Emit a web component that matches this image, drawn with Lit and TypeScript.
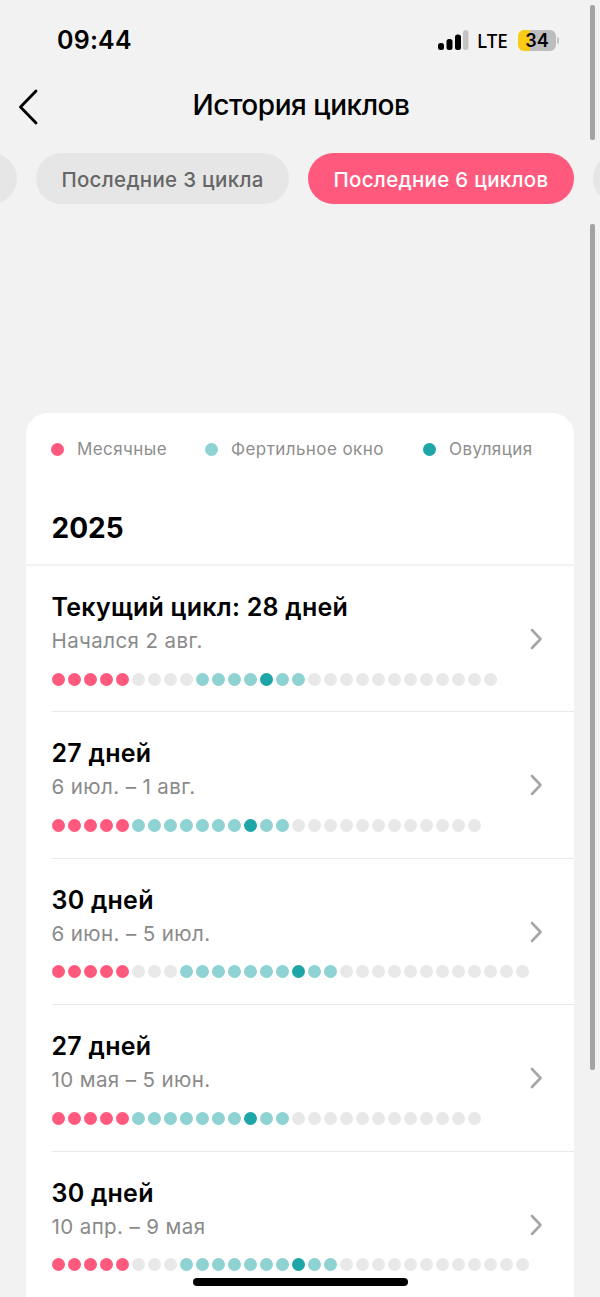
import { LitElement, html, css, svg } from "lit";
import { customElement } from "lit/decorators.js";

type Cycle = { title: string; sub: string; total: number; fertStart: number; ov: number; fertEnd: number };

const CYCLES: Cycle[] = [
  { title: "Текущий цикл: 28 дней", sub: "Начался 2 авг.", total: 28, fertStart: 9, ov: 13, fertEnd: 15 },
  { title: "27 дней", sub: "6 июл. – 1 авг.", total: 27, fertStart: 5, ov: 12, fertEnd: 14 },
  { title: "30 дней", sub: "6 июн. – 5 июл.", total: 30, fertStart: 8, ov: 15, fertEnd: 17 },
  { title: "27 дней", sub: "10 мая – 5 июн.", total: 27, fertStart: 5, ov: 12, fertEnd: 14 },
  { title: "30 дней", sub: "10 апр. – 9 мая", total: 30, fertStart: 8, ov: 15, fertEnd: 17 },
];

function dotClass(c: Cycle, i: number) {
  if (i < 5) return "dot red";
  if (i === c.ov) return "dot ov";
  if (i >= c.fertStart && i <= c.fertEnd) return "dot fert";
  return "dot";
}

@customElement("app-root")
export class AppRoot extends LitElement {
  static styles = css`
    :host {
      display: block;
      width: 600px;
      height: 1297px;
      background: #f2f2f2;
      font-family: Inter, "Noto Sans", sans-serif;
      overflow: hidden;
      position: relative;
    }
    .status {
      height: 81px;
      box-sizing: border-box;
      display: flex;
      justify-content: space-between;
      padding: 25px 41px 0 57px;
    }
    .time {
      font-size: 25px;
      font-weight: 600;
      line-height: 30px;
      color: #000;
      letter-spacing: 0.2px;
    }
    .sys {
      display: flex;
      align-items: center;
      height: 30px;
    }
    .lte {
      font-size: 20.5px;
      font-weight: 500;
      color: #000;
      margin-left: 8px;
      font-family: "Noto Sans", Inter, sans-serif;
      transform: scaleX(0.92);
      transform-origin: left center;
      width: 41px;
    }
    .batt {
      width: 38px;
      height: 21px;
      border-radius: 6px;
      background: linear-gradient(90deg, #f9cb14 0 12px, #bdbdbd 12px);
      color: #000;
      font-size: 18px;
      font-weight: 600;
      display: flex;
      align-items: center;
      justify-content: center;
      line-height: 21px;
    }
    .nub {
      width: 2px;
      height: 7px;
      background: #c4c4c4;
      border-radius: 0 2px 2px 0;
      margin-left: 1px;
    }
    .nav {
      height: 50px;
      display: flex;
      align-items: center;
      justify-content: center;
      position: relative;
    }
    .nav h1 {
      margin: 0;
      font-size: 28px;
      font-weight: 500;
      color: #000;
      letter-spacing: -0.45px;
      position: relative;
      left: 1px;
      top: -1px;
    }
    .back {
      position: absolute;
      left: 17px;
      top: 8px;
    }
    .tabs {
      display: flex;
      gap: 19px;
      margin-top: 22px;
      margin-left: -220px;
      height: 51px;
    }
    .tab {
      flex: none;
      height: 51px;
      padding-top: 1px;
      border-radius: 26px;
      background: #e6e6e6;
      color: #666;
      font-size: 20.5px;
      font-weight: 500;
      letter-spacing: 0.3px;
      display: flex;
      align-items: center;
      justify-content: center;
      box-sizing: border-box;
    }
    .tab.t0 { width: 237px; }
    .tab.t3 { width: 253px; }
    .tab.t6 { width: 266px; background: #ff5a7d; color: #fff; }
    .tab.t9 { width: 200px; }
    .card {
      margin: 209px 26px 0;
      background: #fff;
      border-radius: 22px 22px 0 0;
      height: 900px;
    }
    .legend {
      display: flex;
      align-items: flex-start;
      height: 70px;
      box-sizing: border-box;
      padding: 27px 0 0 25px;
      font-size: 17px;
      line-height: 18px;
      color: #8e8e8e;
      letter-spacing: 0.42px;
    }
    .leg {
      display: flex;
      align-items: center;
    }
    .leg i {
      width: 13px;
      height: 13px;
      border-radius: 50%;
      margin-right: 13px;
    }
    .leg:nth-child(1) { width: 154px; }
    .leg:nth-child(2) { width: 218px; }
    .year {
      height: 83px;
      box-sizing: border-box;
      padding: 28px 0 0 25.5px;
      font-size: 28px;
      font-weight: 700;
      line-height: 34px;
      color: #000;
      border-bottom: 2px solid #f2f2f2;
    }
    .row {
      height: 146.4px;
      box-sizing: border-box;
      margin-left: 25.5px;
      padding-top: 26px;
      position: relative;
      border-bottom: 1.5px solid #e9e9e9;
    }
    .row:last-child { border-bottom: none; }
    .title {
      font-size: 25px;
      font-weight: 600;
      line-height: 30px;
      color: #000;
      letter-spacing: 0.25px;
    }
    .sub {
      font-size: 20.5px;
      line-height: 24px;
      color: #8a8a8a;
      margin-top: 7px;
      letter-spacing: 0.4px;
    }
    .dots {
      display: flex;
      gap: 3px;
      margin-top: 19.5px;
      margin-left: 0.5px;
    }
    .dot {
      width: 13px;
      height: 13px;
      border-radius: 50%;
      background: #e8e8e8;
    }
    .red { background: #ff5a7d; }
    .fert { background: #8ed2d3; }
    .ov { background: #1ea5a8; }
    .chev {
      position: absolute;
      right: 31px;
      top: 61px;
    }
    .scroll {
      position: absolute;
      left: 590px;
      width: 5px;
      background: #a3a3a3;
      border-radius: 2px;
    }
    .sc1 { top: 5px; height: 135px; }
    .sc2 { top: 224px; height: 846px; }
    .home {
      position: absolute;
      left: 193px;
      top: 1278px;
      width: 215px;
      height: 8px;
      border-radius: 4px;
      background: #000;
    }
  `;

  render() {
    return html`
      <div class="status">
        <div class="time">09:44</div>
        <div class="sys">
          <svg width="31" height="20" viewBox="0 0 31 20">
            <rect x="0" y="13" width="6" height="7" rx="2.5" fill="#000"></rect>
            <rect x="8.5" y="9" width="6" height="11" rx="2.5" fill="#000"></rect>
            <rect x="17" y="4.5" width="6" height="15.5" rx="2.5" fill="#000"></rect>
            <rect x="25" y="0" width="5.5" height="20" rx="2.5" fill="#c4c4c4"></rect>
          </svg>
          <div class="lte">LTE</div>
          <div class="batt">34</div>
          <div class="nub"></div>
        </div>
      </div>
      <div class="nav">
        <svg class="back" width="24" height="36" viewBox="0 0 24 36" fill="none">
          <path d="M19 2 L3.5 18 L19 34" stroke="#000" stroke-width="2.8" stroke-linecap="round" stroke-linejoin="round"></path>
        </svg>
        <h1>История циклов</h1>
      </div>
      <div class="tabs">
        <div class="tab t0"></div>
        <div class="tab t3">Последние 3 цикла</div>
        <div class="tab t6">Последние 6 циклов</div>
        <div class="tab t9"></div>
      </div>
      <div class="card">
        <div class="legend">
          <div class="leg"><i class="red"></i>Месячные</div>
          <div class="leg"><i class="fert"></i>Фертильное окно</div>
          <div class="leg"><i class="ov"></i>Овуляция</div>
        </div>
        <div class="year">2025</div>
        ${CYCLES.map(
          (c) => html`
            <div class="row">
              <div class="title">${c.title}</div>
              <div class="sub">${c.sub}</div>
              <div class="dots">
                ${Array.from({ length: c.total }, (_, i) => html`<div class=${dotClass(c, i)}></div>`)}
              </div>
              <svg class="chev" width="14" height="24" viewBox="0 0 14 24" fill="none">
                ${svg`<path d="M3 3 L11.5 12 L3 21" stroke="#a6a6a6" stroke-width="2.6" stroke-linecap="round" stroke-linejoin="round"></path>`}
              </svg>
            </div>
          `
        )}
      </div>
      <div class="scroll sc1"></div>
      <div class="scroll sc2"></div>
      <div class="home"></div>
    `;
  }
}
